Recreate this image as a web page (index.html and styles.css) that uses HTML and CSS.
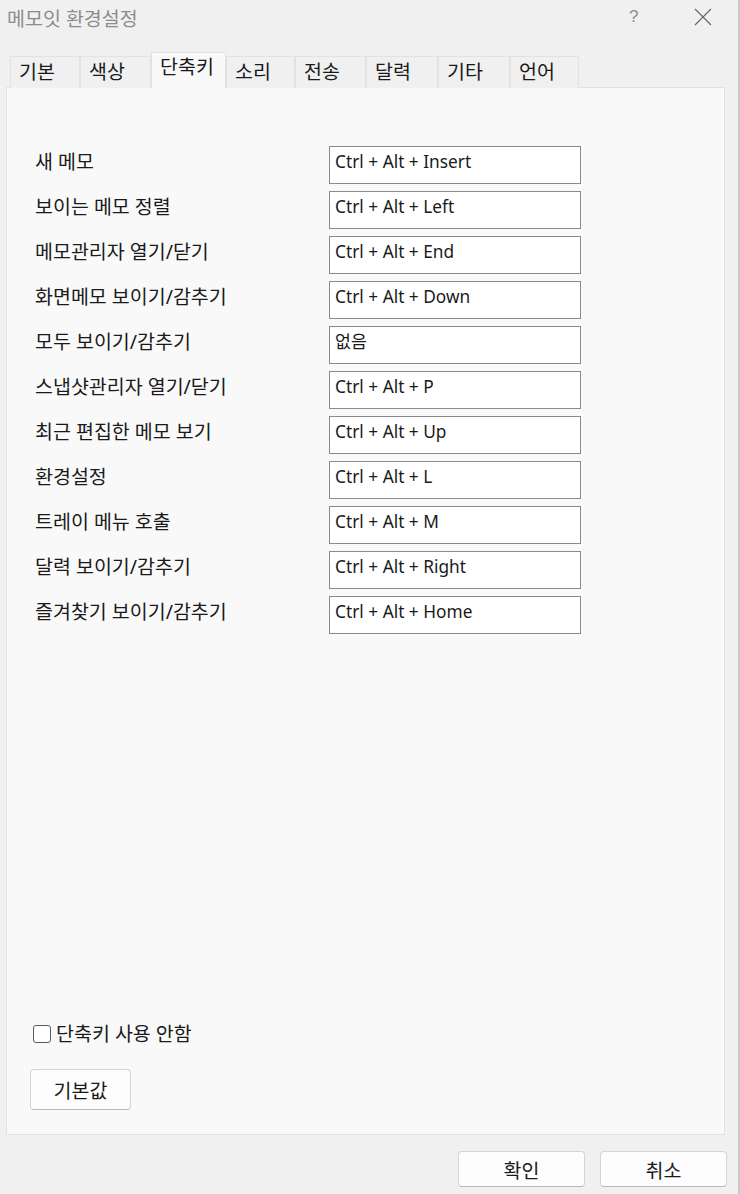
FILE: index.html
```html
<!DOCTYPE html>
<html lang="ko">
<head>
    <meta charset="UTF-8">
    <title>메모잇 환경설정</title>
    <link rel="stylesheet" href="styles.css">
</head>
<body>
    <div id="dialog">
        <div class="titlebar">
            <span class="title">메모잇 환경설정</span>
            <span class="help">?</span>
            <span class="close">
                <svg width="18" height="18" viewBox="0 0 18 18"><path d="M1 1L17 17M17 1L1 17" stroke="#666" stroke-width="1.1" fill="none"/></svg>
            </span>
        </div>
        <ul class="tabs">
            <li style="width:70px">기본</li>
            <li style="width:71px">색상</li>
            <li class="on" style="width:75px">단축키</li>
            <li style="width:69px">소리</li>
            <li style="width:71px">전송</li>
            <li style="width:72px">달력</li>
            <li style="width:72px">기타</li>
            <li style="width:69px">언어</li>
        </ul>
        <div class="panel">
            <div class="keys">
                <div class="row"><label>새 메모</label><div class="field">Ctrl + Alt + Insert</div></div>
                <div class="row"><label>보이는 메모 정렬</label><div class="field">Ctrl + Alt + Left</div></div>
                <div class="row"><label>메모관리자 열기/닫기</label><div class="field">Ctrl + Alt + End</div></div>
                <div class="row"><label>화면메모 보이기/감추기</label><div class="field">Ctrl + Alt + Down</div></div>
                <div class="row"><label>모두 보이기/감추기</label><div class="field">없음</div></div>
                <div class="row"><label>스냅샷관리자 열기/닫기</label><div class="field">Ctrl + Alt + P</div></div>
                <div class="row"><label>최근 편집한 메모 보기</label><div class="field">Ctrl + Alt + Up</div></div>
                <div class="row"><label>환경설정</label><div class="field">Ctrl + Alt + L</div></div>
                <div class="row"><label>트레이 메뉴 호출</label><div class="field">Ctrl + Alt + M</div></div>
                <div class="row"><label>달력 보이기/감추기</label><div class="field">Ctrl + Alt + Right</div></div>
                <div class="row"><label>즐겨찾기 보이기/감추기</label><div class="field">Ctrl + Alt + Home</div></div>
            </div>
            <div class="check"><span class="box"></span>단축키 사용 안함</div>
            <div class="btn reset">기본값</div>
        </div>
        <div class="footer">
            <div class="btn">확인</div>
            <div class="btn">취소</div>
        </div>
    </div>
</body>
</html>
```

FILE: styles.css
```css
*{ margin: 0; padding: 0; box-sizing: border-box;}
li{ list-style: none;}
body{
    background: #f0f0f0;
    font-family: "Noto Sans", "Noto Sans CJK KR", sans-serif;
    font-size: 19.5px;
    color: #1a1a1a;
}
#dialog{
    display: flex;
    flex-direction: column;
    width: 740px;
    height: 1194px;
    border-right: 2px solid #c8c8c8;
}
#dialog .titlebar{
    display: flex;
    align-items: center;
    height: 34px;
    padding-left: 7px;
}
#dialog .title{
    flex: 1;
    color: #8c8c8c;
}
#dialog .help{
    width: 20px;
    color: #8c8c8c;
    font-size: 17px;
    font-family: "Liberation Sans", sans-serif;
    margin-right: 45px;
}
#dialog .close{
    display: flex;
    width: 18px;
    margin-right: 26px;
}
#dialog .tabs{
    display: flex;
    align-items: flex-end;
    height: 35px;
    margin: 18px 0 0 10px;
    position: relative;
    z-index: 1;
}
#dialog .tabs li{
    height: 32px;
    padding: 3px 0 0 8px;
    background: #f0f0f0;
    border: 1px solid #e2e2e2;
    border-bottom: none;
    line-height: 24px;
    margin-bottom: -1px;
}
#dialog .tabs li.on{
    height: 36px;
    padding-top: 2px;
    background: #f9f9f9;
}
#dialog .panel{
    display: flex;
    flex-direction: column;
    height: 1048px;
    margin: 0 13px 0 6px;
    padding: 58px 0 0 28px;
    background: #f9f9f9;
    border: 1px solid #e2e2e2;
}
#dialog .keys{
    display: flex;
    flex-direction: column;
    gap: 7px;
}
#dialog .row{
    display: flex;
    align-items: flex-start;
}
#dialog .row label{
    width: 294px;
    padding-top: 3px;
    line-height: 26px;
}
#dialog .field{
    width: 252px;
    height: 38px;
    padding: 2px 5px;
    background: #fff;
    border: 1px solid #8a8a8a;
    line-height: 26px;
    font-size: 17.3px;
    color: #1a1a1a;
}
#dialog .check{
    display: flex;
    align-items: center;
    margin: 387px 0 0 -2px;
    line-height: 26px;
}
#dialog .check .box{
    width: 18px;
    height: 18px;
    margin-right: 5px;
    background: #fff;
    border: 1px solid #5a5a5a;
    border-radius: 3px;
}
#dialog .btn{
    display: flex;
    align-items: center;
    justify-content: center;
    width: 127px;
    height: 36px;
    background: #fdfdfd;
    border: 1px solid #d4d4d4;
    border-bottom-color: #b8b8b8;
    border-radius: 4px;
}
#dialog .reset{
    width: 101px;
    height: 41px;
    margin: 22px 0 0 -5px;
}
#dialog .footer{
    display: flex;
    justify-content: flex-end;
    gap: 15px;
    padding: 16px 11px 0 0;
}
```
